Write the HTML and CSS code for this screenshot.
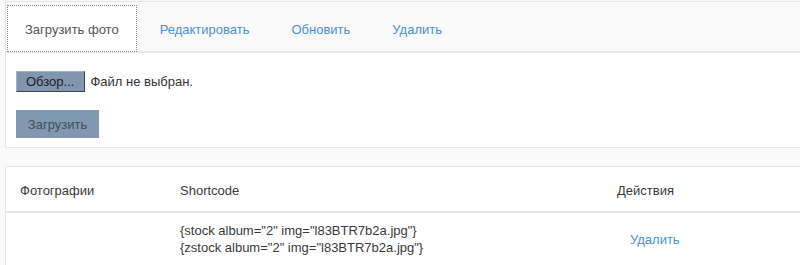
FILE: index.html
```html
<!DOCTYPE html>
<html lang="ru">
<head>
  <meta charset="UTF-8">
  <title>Фотографии</title>
  <link rel="stylesheet" href="styles.css">
</head>
<body>
  <div class="box upload-box">
    <ul class="tabs">
      <li class="tab active">Загрузить фото</li>
      <li class="tab"><a href="#">Редактировать</a></li>
      <li class="tab"><a href="#">Обновить</a></li>
      <li class="tab"><a href="#">Удалить</a></li>
    </ul>
    <div class="tab-body">
      <div class="file-row">
        <span class="browse-btn">Обзор...</span>
        <span class="file-name">Файл не выбран.</span>
      </div>
      <button class="submit-btn" type="button">Загрузить</button>
    </div>
  </div>

  <div class="box photo-table">
    <div class="row head">
      <div class="cell">Фотографии</div>
      <div class="cell">Shortcode</div>
      <div class="cell">Действия</div>
    </div>
    <div class="row">
      <div class="cell"></div>
      <div class="cell code">
        {stock album="2" img="l83BTR7b2a.jpg"}<br>
        {zstock album="2" img="l83BTR7b2a.jpg"}
      </div>
      <div class="cell action"><a href="#">Удалить</a></div>
    </div>
  </div>
</body>
</html>
```

FILE: styles.css
```css
body {
  margin: 0;
  padding: 1px 0 0 5px;
  background: #f9f9f9;
  font-family: "Liberation Sans", Arial, sans-serif;
  font-size: 13px;
  color: #3a3a3a;
}
a {
  color: #4a90d2;
  text-decoration: none;
}
.box {
  background: #fff;
  border: 1px solid #e6e6e6;
  border-right: none;
}
.tabs {
  list-style: none;
  margin: 0;
  padding: 3px 0 0 1px;
  display: flex;
  background: #f9f9f9;
  border-bottom: 2px solid #e6e6e6;
}
.tab {
  height: 43px;
  line-height: 43px;
  padding: 2px 18px 0;
  margin-right: 4px;
  border: 1px solid transparent;
  margin-bottom: -1px;
}
.tab.active {
  background: #fff;
  color: #555;
  border: 1px dotted #8a8a8a;
  padding: 2px 17px 0 17px;
}
.tab-body {
  padding: 18px 10px 9px;
}
.file-row {
  display: flex;
  align-items: center;
  gap: 5px;
}
.browse-btn {
  display: inline-block;
  height: 19px;
  line-height: 19px;
  padding: 0 10px 0 9px;
  background: #7f96ae;
  color: #1f2226;
  border: 1px solid #3d4652;
  border-top-color: #9fb1c3;
  border-left-color: #9fb1c3;
}
.file-name {
  color: #333;
}
.submit-btn {
  display: block;
  margin-top: 18px;
  width: 83px;
  height: 28px;
  border: none;
  background: #8098b1;
  color: #454d57;
  font-family: inherit;
  font-size: 13px;
  padding: 0;
}
.photo-table {
  margin-top: 18px;
}
.row {
  display: grid;
  grid-template-columns: 160px 437px 1fr;
  align-items: center;
}
.row.head {
  height: 41px;
  padding-top: 3px;
  border-bottom: 2px solid #e6e6e6;
}
.cell {
  padding: 0 14px;
}
.code {
  padding-top: 9px;
  padding-bottom: 9px;
  line-height: 17px;
}
.action a {
  margin-left: 13px;
}
```
